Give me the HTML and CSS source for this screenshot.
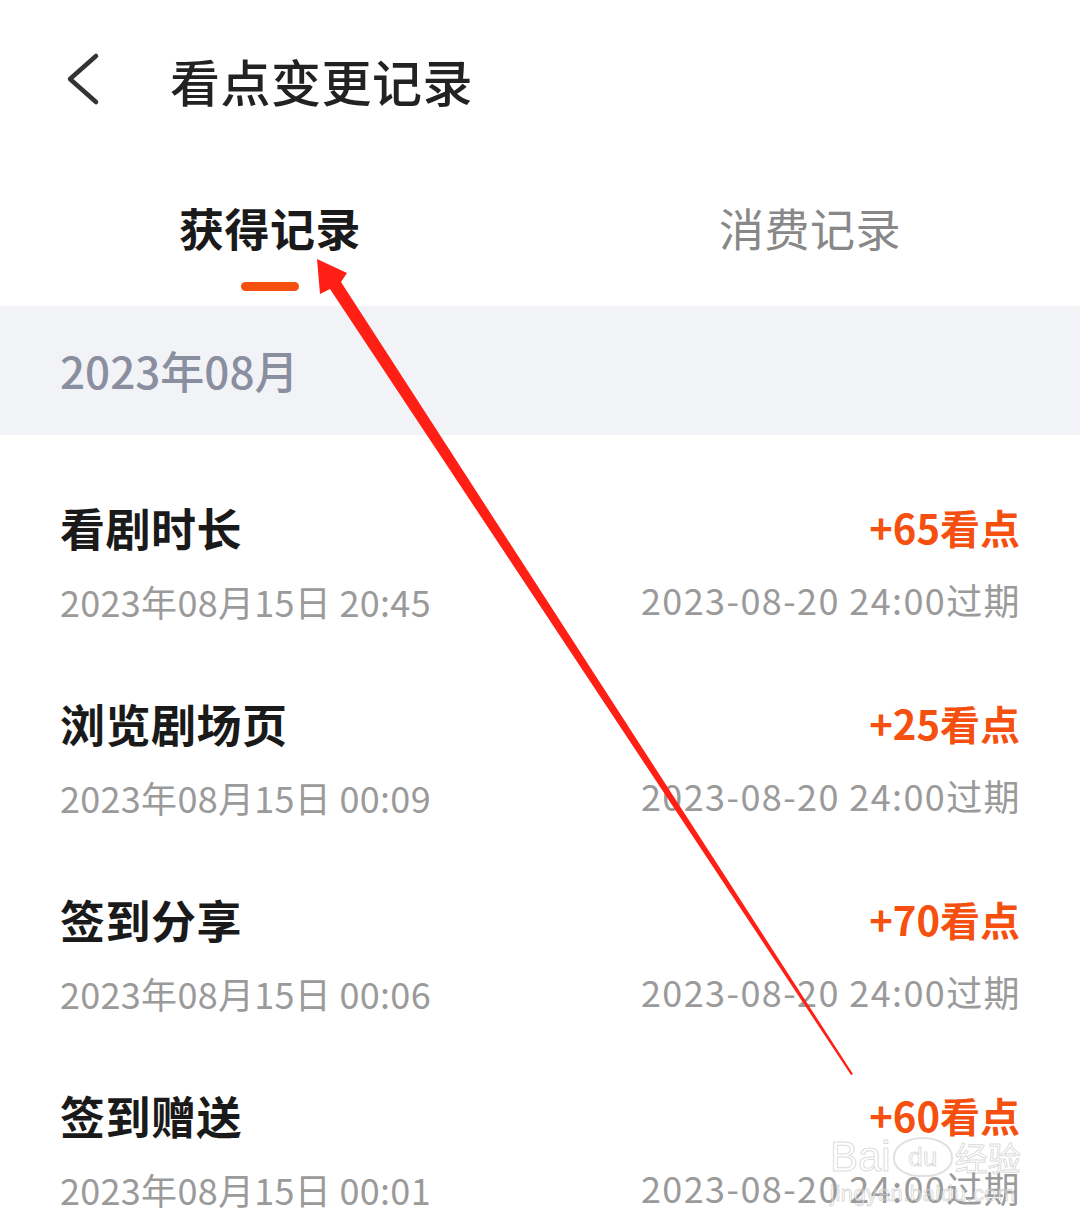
FILE: index.html
```html
<!DOCTYPE html>
<html lang="zh-CN">
<head>
	<meta charset="UTF-8">
	<meta name="viewport" content="width=device-width, initial-scale=1.0">
	<title>看点变更记录</title>
	<link rel="stylesheet" href="styles.css">
</head>
<body>
	<header class="topbar">
		<svg class="back" width="40" height="56" viewBox="0 0 40 56">
			<polyline points="32,4 6,27 32,50" fill="none" stroke="#333" stroke-width="4.5" stroke-linecap="round" stroke-linejoin="round"/>
		</svg>
		<h1 class="title">看点变更记录</h1>
	</header>

	<nav class="tabs">
		<div class="tab active">
			<span class="tab-text">获得记录</span>
			<i class="tab-bar"></i>
		</div>
		<div class="tab">
			<span class="tab-text">消费记录</span>
			<i class="tab-bar"></i>
		</div>
	</nav>

	<div class="month">2023年08月</div>

	<ul class="list">
		<li class="row">
			<div class="row-top">
				<span class="name">看剧时长</span>
				<span class="amount">+65看点</span>
			</div>
			<div class="row-bottom">
				<span class="time">2023年08月15日 20:45</span>
				<span class="expire">2023-08-20 24:00过期</span>
			</div>
		</li>
		<li class="row">
			<div class="row-top">
				<span class="name">浏览剧场页</span>
				<span class="amount">+25看点</span>
			</div>
			<div class="row-bottom">
				<span class="time">2023年08月15日 00:09</span>
				<span class="expire">2023-08-20 24:00过期</span>
			</div>
		</li>
		<li class="row">
			<div class="row-top">
				<span class="name">签到分享</span>
				<span class="amount">+70看点</span>
			</div>
			<div class="row-bottom">
				<span class="time">2023年08月15日 00:06</span>
				<span class="expire">2023-08-20 24:00过期</span>
			</div>
		</li>
		<li class="row">
			<div class="row-top">
				<span class="name">签到赠送</span>
				<span class="amount">+60看点</span>
			</div>
			<div class="row-bottom">
				<span class="time">2023年08月15日 00:01</span>
				<span class="expire">2023-08-20 24:00过期</span>
			</div>
		</li>
	</ul>

	<!-- annotation drawn over the screenshot -->
	<svg class="arrow" width="1080" height="1229" viewBox="0 0 1080 1229">
		<polygon points="317,259 347,273 341,282 853,1074 851,1075 330,289 320,294" fill="#ff1f14"/>
	</svg>

	<div class="watermark">
		<div class="wm-logo">Bai<span class="wm-du">du</span><span class="wm-cn">经验</span></div>
		<div class="wm-url">jingyan.baidu.com</div>
	</div>
</body>
</html>
```

FILE: styles.css
```css
*,
*::before,
*::after {
	padding: 0;
	margin: 0;
	box-sizing: border-box;
}
body {
	position: relative;
	width: 1080px;
	height: 1229px;
	overflow: hidden;
	background: #fff;
	font-family: "Noto Sans CJK SC", "Noto Sans", sans-serif;
	color: #1a1a1a;
}

/* header */
.topbar {
	height: 166px;
	display: flex;
	align-items: center;
	padding: 0 0 6px 64px;
}
.back {
	display: block;
}
.title {
	margin-left: 66px;
	font-size: 50px;
	font-weight: 500;
	line-height: 60px;
	letter-spacing: 0.5px;
	color: #222;
}

/* tabs */
.tabs {
	display: flex;
	height: 140px;
	padding-top: 36px;
}
.tab {
	flex: 1;
	display: flex;
	flex-direction: column;
	align-items: center;
}
.tab-text {
	font-size: 45px;
	line-height: 52px;
	letter-spacing: 0.5px;
	color: #888;
}
.tab-bar {
	display: block;
	width: 58px;
	height: 9px;
	margin-top: 28px;
	border-radius: 5px;
}
.tab.active .tab-text {
	font-weight: 700;
	color: #1a1a1a;
}
.tab.active .tab-bar {
	background: #f5500f;
}

/* month band */
.month {
	height: 129px;
	display: flex;
	align-items: center;
	padding: 0 0 2px 60px;
	background: #f2f3f7;
	font-size: 44px;
	font-weight: 500;
	color: #8a8f9f;
}

/* list */
.list {
	list-style: none;
	padding-top: 31px;
}
.row {
	padding: 35px 60px 39px;
}
.row-top,
.row-bottom {
	display: flex;
	justify-content: space-between;
	align-items: center;
}
.row-top {
	height: 52px;
}
.row-bottom {
	height: 44px;
	margin-top: 26px;
}
.name {
	font-size: 45px;
	font-weight: 700;
	letter-spacing: 0.5px;
	color: #1a1a1a;
}
.amount {
	font-size: 40px;
	font-weight: 700;
	color: #f5500f;
}
.time,
.expire {
	font-size: 36px;
	color: #9a9a9a;
}
.time {
	letter-spacing: 0.3px;
}
.expire {
	margin-top: -4px;
	letter-spacing: 1.4px;
	margin-right: -1px;
}

/* overlays */
.arrow {
	position: absolute;
	left: 0;
	top: 0;
	pointer-events: none;
}
.watermark {
	position: absolute;
	left: 830px;
	top: 1134px;
	white-space: nowrap;
	color: rgba(255, 255, 255, 0.5);
	-webkit-text-stroke: 1px rgba(150, 150, 150, 0.35);
	font-family: "Liberation Sans", "Noto Sans CJK SC", sans-serif;
	pointer-events: none;
}
.wm-logo {
	display: flex;
	align-items: center;
	font-size: 42px;
	line-height: 46px;
}
.wm-du {
	display: inline-flex;
	align-items: center;
	justify-content: center;
	flex: none;
	width: 60px;
	height: 40px;
	margin: 0 2px;
	border: 2px solid rgba(170, 170, 170, 0.35);
	border-radius: 50% 50% 45% 45%;
	font-size: 26px;
	line-height: 1;
}
.wm-cn {
	font-size: 33px;
	font-family: "Noto Sans CJK SC", sans-serif;
}
.wm-url {
	font-size: 22px;
	line-height: 28px;
	letter-spacing: 0.5px;
}
```
